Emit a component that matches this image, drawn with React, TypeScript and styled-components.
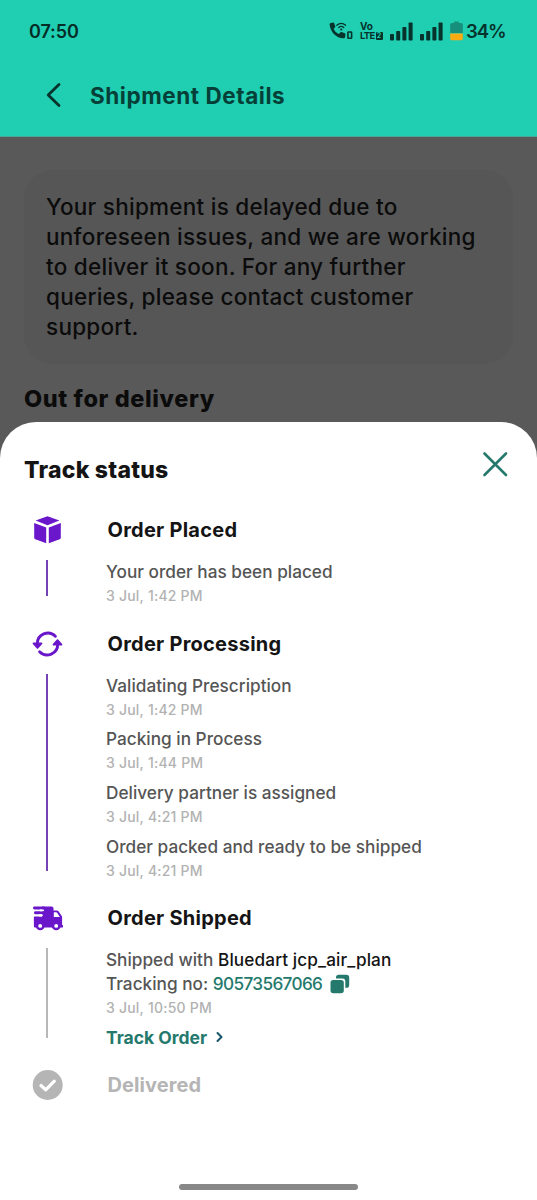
import React from "react";
import styled, { createGlobalStyle } from "styled-components";

const Global = createGlobalStyle`
  * { box-sizing: border-box; }
  body { margin: 0; background: #595959; }
  h1, h2, h3, p { margin: 0; }
  button { border: 0; padding: 0; background: none; font: inherit; color: inherit; display: flex; }
  svg { display: block; flex: none; }
`;

const Screen = styled.div`
  width: 537px;
  height: 1200px;
  display: flex;
  flex-direction: column;
  overflow: hidden;
  background: #595959;
  font-family: Inter, "Liberation Sans", sans-serif;
  color: #141414;
  white-space: nowrap;
`;

const TopArea = styled.header`
  flex: none;
  height: 137px;
  background: #20ceb2;
  border-bottom: 1px solid #48a897;
`;

const StatusBar = styled.div`
  height: 62px;
  padding: 0 32px 0 29px;
  display: flex;
  align-items: center;
  justify-content: space-between;
  color: #06332c;
`;

const Clock = styled.span`
  font-size: 18px;
  font-weight: 600;
  letter-spacing: -0.1px;
  color: #052c26;
`;

const StatusIcons = styled.div`
  display: flex;
  align-items: center;
`;

const VoLte = styled.div`
  width: 24px;
  margin: 0 6px 0 6px;
  font-size: 10px;
  font-weight: 700;
`;

const VoRow = styled.div`
  height: 10px;
  line-height: 10px;
`;

const LteRow = styled.div`
  height: 10px;
  display: flex;
  align-items: center;
  font-size: 9.5px;
  line-height: 10px;
  letter-spacing: -0.7px;
  gap: 1px;
`;

const SimBadge = styled.span`
  width: 7px;
  height: 8px;
  border-radius: 1px;
  background: #06332c;
  color: #20ceb2;
  font-size: 7px;
  line-height: 8px;
  letter-spacing: 0;
  text-align: center;
`;

const SignalPair = styled.div`
  display: flex;
  gap: 7px;
  margin-right: 7px;
`;

const Battery = styled.span`
  width: 39px;
  font-size: 18.5px;
  font-weight: 600;
  letter-spacing: -1.1px;
  margin-left: 3px;
`;

const TitleBar = styled.div`
  height: 66px;
  padding-left: 46px;
  display: flex;
  align-items: center;
  gap: 28px;
`;

const PageTitle = styled.h1`
  font-size: 22.5px;
  font-weight: 650;
  letter-spacing: 0.55px;
  color: #063f37;
`;

const Backdrop = styled.main`
  flex: none;
  height: 285px;
  padding: 33px 24px 0;
  display: flex;
  flex-direction: column;
  color: #0b0b0b;
`;

const Notice = styled.p`
  height: 194px;
  padding: 22px;
  border-radius: 29px;
  background: #565656;
  font-size: 22.5px;
  line-height: 30px;
  font-weight: 470;
  letter-spacing: 0.26px;
`;

const StateTitle = styled.h2`
  margin-top: 20px;
  font-size: 23.5px;
  line-height: 30px;
  font-weight: 850;
  letter-spacing: 0.6px;
`;

const SheetWrap = styled.div`
  flex: 1;
  display: flex;
  background: #595959;
`;

const Sheet = styled.section`
  flex: 1;
  display: flex;
  flex-direction: column;
  background: #fff;
  border-radius: 36px 36px 0 0;
`;

const SheetHeader = styled.div`
  height: 93px;
  padding: 28px 28px 0 24px;
  display: flex;
  align-items: flex-start;
  justify-content: space-between;
`;

const SheetTitle = styled.h2`
  padding-top: 5px;
  font-size: 23px;
  line-height: 30px;
  font-weight: 800;
  letter-spacing: 0.25px;
`;

const StepRow = styled.div`
  display: flex;
  padding-left: 32px;
`;

const Rail = styled.div`
  width: 31px;
  display: flex;
  flex-direction: column;
  align-items: center;
`;

const IconBox = styled.div`
  height: 30px;
  display: flex;
  align-items: center;
`;

const Line = styled.div<{ $done: boolean }>`
  width: 2px;
  flex: 1;
  margin: 15px 1px 32.5px 0;
  background: ${(p) => (p.$done ? "#7442b4" : "#b8b8b8")};
`;

const StepContent = styled.div<{ $last: boolean }>`
  padding: 0 0 ${(p) => (p.$last ? 0 : 21.5)}px 43px;
`;

const StepTitle = styled.h3<{ $muted?: boolean }>`
  padding-left: 1.5px;
  font-size: 20px;
  line-height: 30px;
  font-weight: 650;
  letter-spacing: ${(p) => (p.$muted ? 0.1 : 0.25)}px;
  color: ${(p) => (p.$muted ? "#b5b5b5" : "#141414")};
`;

const Events = styled.div`
  padding-top: 15px;
  display: flex;
  flex-direction: column;
  gap: 6.7px;
`;

const EventText = styled.p`
  display: flex;
  align-items: center;
  font-size: 17.2px;
  line-height: 24px;
  font-weight: 450;
  letter-spacing: 0.02px;
  color: #555;
  white-space: pre;
`;

const EventTime = styled.p`
  font-size: 14px;
  line-height: 23px;
  font-weight: 500;
  letter-spacing: 0.22px;
  color: #b2b2b2;
`;

const Carrier = styled.span`
  color: #141414;
  letter-spacing: 0.12px;
`;

const TrackingNumber = styled.span`
  color: #24796c;
  letter-spacing: -0.65px;
  margin-right: 8px;
`;

const TrackLink = styled.button`
  align-items: center;
  gap: 9px;
  height: 23px;
  font-size: 17.5px;
  font-weight: 650;
  color: #24796c;
`;

const HomeArea = styled.div`
  margin-top: auto;
  height: 16px;
  display: flex;
  justify-content: center;
`;

const HomeBar = styled.div`
  width: 179px;
  height: 6px;
  border-radius: 3px;
  background: #888;
`;

const PURPLE = "#6a17cb";

const CallIcon = () => (
  <svg width="25" height="20" viewBox="0 0 25 20" fill="none">
    <path d="M1.200 2.200 4 1.400c.7-.1 1 .2 1.200.8l1.100 3c.1.500 0 .9-.4 1.200L4.600 7.700c1.100 2.400 2.800 4.200 5.200 5.300l1.600-1.600c.4-.4.800-.5 1.300-.3l3 1.200c.6.2.9.600.8 1.200l-.4 2.600c-.2.9-.8 1.300-1.700 1.200C7.200 16.900 1.500 11 .6 3.400c-.1-.6.1-1 .6-1.200Z" fill="#06332c" />
    <path d="M7.800 4.300c2.600-2.300 6.200-2.300 8.800 0M9.700 6.500c1.500-1.300 3.500-1.300 5 0" stroke="#06332c" strokeWidth="1.200" strokeLinecap="round" />
    <circle cx="12.200" cy="8.500" r="1.100" fill="#06332c" />
    <rect x="18.900" y="11" width="3.700" height="6.300" rx=".6" stroke="#06332c" strokeWidth="1.600" />
  </svg>
);

const SignalIcon = () => (
  <svg width="23" height="19" viewBox="0 0 23 19" fill="#06332c">
    <rect x="0" y="12" width="4" height="6.500" rx=".8" />
    <rect x="6.200" y="9" width="4" height="9.500" rx=".8" />
    <rect x="12.400" y="5" width="4" height="13.500" rx=".8" />
    <rect x="18.600" y="0.500" width="4" height="18" rx=".8" />
  </svg>
);

const BatteryIcon = () => (
  <svg width="13" height="20" viewBox="0 0 13 20">
    <path d="M4 1.500C4 .8 4.300.5 5 .5h3c.7 0 1 .3 1 1V2h2c1.200 0 1.800.7 1.800 1.800V12H.2V3.800C.2 2.700.8 2 2 2h2Z" fill="#16907c" />
    <path d="M.2 12.500h12.600v5c0 1.200-.6 1.800-1.800 1.800H2c-1.200 0-1.800-.6-1.800-1.800Z" fill="#f9ac12" />
  </svg>
);

const BackIcon = () => (
  <svg width="16" height="26" viewBox="0 0 16 26" fill="none" stroke="#06332c" strokeWidth="2.800" strokeLinecap="round" strokeLinejoin="round">
    <path d="M13 2.400 2.200 13 13 23.600" />
  </svg>
);

const CloseIcon = () => (
  <svg width="28" height="28" viewBox="0 0 28 28" fill="none" stroke="#24796c" strokeWidth="2.600" strokeLinecap="round">
    <path d="m3.500 3.500 21.500 21.500M25 3.500 3.500 25" />
  </svg>
);

const BoxIcon = () => (
  <svg width="31" height="30" viewBox="0 0 31 30" fill={PURPLE}>
    <path d="M15.500 1.200 27.400 5.600 15.500 10.200 3.600 5.600Z" />
    <path d="M2.200 8 14.200 12.600V28.200L3.400 24.200C2.500 23.800 2.200 23.400 2.200 22.500Z" />
    <path d="M28.800 8 16.800 12.600V28.200L27.600 24.200C28.500 23.800 28.800 23.400 28.800 22.500Z" />
  </svg>
);

const CycleIcon = () => (
  <svg width="31" height="30" viewBox="0 0 31 30" fill="none">
    <path d="M23.400 7.200A10.600 10.600 0 0 0 5.300 15" stroke={PURPLE} strokeWidth="2.900" strokeLinecap="round" />
    <path d="M7.600 22.800A10.600 10.600 0 0 0 25.700 15" stroke={PURPLE} strokeWidth="2.900" strokeLinecap="round" />
    <path d="M1.500 14.500h8L5.500 18.800Z" fill={PURPLE} stroke={PURPLE} strokeWidth="1.800" strokeLinejoin="round" />
    <path d="M21.500 15.500h8L25.500 11.200Z" fill={PURPLE} stroke={PURPLE} strokeWidth="1.800" strokeLinejoin="round" />
  </svg>
);

const TruckIcon = () => (
  <svg width="31" height="30" viewBox="0 0 31 30" fill={PURPLE}>
    <path d="M10 3.500h9.500c1.200 0 2 .8 2 2v2.100h3.300c.8 0 1.400.3 1.900.9l2.900 4.200c.4.500.5.9.5 1.500V22a1.300 1.300 0 0 1 0 2.600H3.300c-.9 0-1.400-.5-1.400-1.400v-6.900H10Z" />
    <rect x="1" y="3.500" width="12" height="2.900" rx="1.400" />
    <rect x="2" y="8.300" width="10" height="3" rx="1.400" />
    <rect x="1.900" y="13.400" width="9" height="5" rx=".8" />
    <path d="M7 11.300h2.800a1 1 0 0 1 0 2.100H7Z" fill="#fff" />
    <path d="M8 6.400h3.100a.95.95 0 0 1 0 1.900H8Z" fill="#fff" />
    <path d="M21.800 9.300h2.400c.5 0 .8.200 1.100.6l2.500 4.100h-6Z" fill="#fff" />
    <circle cx="8.200" cy="22.900" r="3.200" fill="#fff" stroke={PURPLE} strokeWidth="2.500" />
    <circle cx="24.200" cy="22.900" r="3.200" fill="#fff" stroke={PURPLE} strokeWidth="2.500" />
  </svg>
);

const CheckIcon = () => (
  <svg width="31" height="30" viewBox="0 0 31 30" fill="none">
    <circle cx="15.700" cy="15" r="15" fill="#b5b5b5" />
    <path d="m9 15.500 4.700 4.300 8.600-8.600" stroke="#fff" strokeWidth="3.200" strokeLinecap="round" strokeLinejoin="round" />
  </svg>
);

const CopyIcon = () => (
  <svg width="20" height="20" viewBox="0 0 20 20" fill="#24796c">
    <rect x=".5" y="6" width="13.300" height="13.300" rx="2.800" />
    <path d="M6 4.500V3.600C6 1.600 7 .7 8.900.7h7.400c2 0 2.900.9 2.900 2.900v7.300c0 2-.9 2.900-2.900 2.900h-1V7.400c0-2-.9-2.900-2.900-2.900Z" />
  </svg>
);

const ChevronIcon = () => (
  <svg width="8" height="12" viewBox="0 0 8 12" fill="none" stroke="#17566a" strokeWidth="2" strokeLinecap="round" strokeLinejoin="round">
    <path d="m1.500 2 4 4-4 4" />
  </svg>
);

type EventItem = { text: string; time: string };

type StepProps = {
  icon: React.ReactNode;
  title: string;
  done?: boolean;
  last?: boolean;
  events?: EventItem[];
  children?: React.ReactNode;
};

function Step({ icon, title, done = false, last = false, events = [], children }: StepProps) {
  return (
    <StepRow>
      <Rail>
        <IconBox>{icon}</IconBox>
        {!last && <Line $done={done} />}
      </Rail>
      <StepContent $last={last}>
        <StepTitle $muted={last}>{title}</StepTitle>
        {!last && (
          <Events>
            {events.map((e) => (
              <div key={e.text}>
                <EventText>{e.text}</EventText>
                <EventTime>{e.time}</EventTime>
              </div>
            ))}
            {children}
          </Events>
        )}
      </StepContent>
    </StepRow>
  );
}

const processing: EventItem[] = [
  { text: "Validating Prescription", time: "3 Jul, 1:42 PM" },
  { text: "Packing in Process", time: "3 Jul, 1:44 PM" },
  { text: "Delivery partner is assigned", time: "3 Jul, 4:21 PM" },
  { text: "Order packed and ready to be shipped", time: "3 Jul, 4:21 PM" },
];

export default function App() {
  return (
    <>
      <Global />
      <Screen>
        <TopArea>
          <StatusBar>
            <Clock>07:50</Clock>
            <StatusIcons>
              <CallIcon />
              <VoLte>
                <VoRow>Vo</VoRow>
                <LteRow>
                  LTE<SimBadge>2</SimBadge>
                </LteRow>
              </VoLte>
              <SignalPair>
                <SignalIcon />
                <SignalIcon />
              </SignalPair>
              <BatteryIcon />
              <Battery>34%</Battery>
            </StatusIcons>
          </StatusBar>
          <TitleBar>
            <button aria-label="Back">
              <BackIcon />
            </button>
            <PageTitle>Shipment Details</PageTitle>
          </TitleBar>
        </TopArea>
        <Backdrop>
          <Notice>
            Your shipment is delayed due to
            <br />
            unforeseen issues, and we are working
            <br />
            to deliver it soon. For any further
            <br />
            queries, please contact customer
            <br />
            support.
          </Notice>
          <StateTitle>Out for delivery</StateTitle>
        </Backdrop>
        <SheetWrap>
          <Sheet>
            <SheetHeader>
              <SheetTitle>Track status</SheetTitle>
              <button aria-label="Close">
                <CloseIcon />
              </button>
            </SheetHeader>
            <Step icon={<BoxIcon />} title="Order Placed" done events={[{ text: "Your order has been placed", time: "3 Jul, 1:42 PM" }]} />
            <Step icon={<CycleIcon />} title="Order Processing" done events={processing} />
            <Step icon={<TruckIcon />} title="Order Shipped">
              <div>
                <EventText>
                  Shipped with <Carrier>Bluedart jcp_air_plan</Carrier>
                </EventText>
                <EventText>
                  Tracking no: <TrackingNumber>90573567066</TrackingNumber>
                  <CopyIcon />
                </EventText>
                <EventTime>3 Jul, 10:50 PM</EventTime>
              </div>
              <TrackLink>
                Track Order
                <ChevronIcon />
              </TrackLink>
            </Step>
            <Step icon={<CheckIcon />} title="Delivered" last />
            <HomeArea>
              <HomeBar />
            </HomeArea>
          </Sheet>
        </SheetWrap>
      </Screen>
    </>
  );
}
